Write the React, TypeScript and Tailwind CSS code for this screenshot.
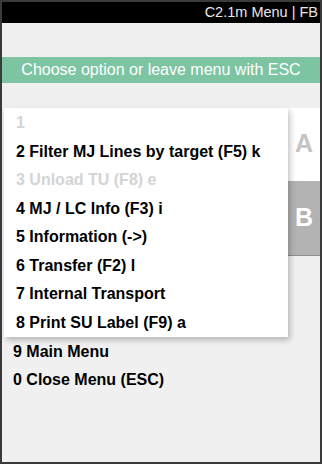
import React from "react";

const items = [
  { label: "1", disabled: true },
  { label: "2 Filter MJ Lines by target (F5) k" },
  { label: "3 Unload TU (F8) e", disabled: true },
  { label: "4 MJ / LC Info (F3) i" },
  { label: "5 Information (->)" },
  { label: "6 Transfer (F2) l" },
  { label: "7 Internal Transport" },
  { label: "8 Print SU Label (F9) a" },
];

export default function App() {
  return (
    <div className="w-[322px] h-[464px] border-2 border-[#3a3a3a] bg-[#f0f0f0] flex flex-col font-['Liberation_Sans',Arial,sans-serif]">
      <div className="h-[21px] bg-black flex items-center justify-end pr-[2px] text-[14.5px] text-[#e8e8e8] leading-none">
        C2.1m Menu | FB
      </div>
      <div className="mt-[34px] h-[26px] bg-[#7dc4a3] flex items-center justify-center text-white text-[16px] leading-none">
        Choose option or leave menu with ESC
      </div>
      <div className="mt-[25px] flex">
        <div className="ml-[2px] w-[284px] pt-[1px] bg-white shadow-[2px_3px_6px_rgba(0,0,0,0.25)] z-10">
          {items.map((it) => (
            <div
              key={it.label}
              className={`h-[28.5px] flex items-center pl-[12px] text-[16px] font-bold ${
                it.disabled ? "text-[#d4d4d4]" : "text-black"
              }`}
            >
              {it.label}
            </div>
          ))}
        </div>
        <div className="w-[32px] flex flex-col">
          <div className="h-[73px] pb-[2px] bg-white flex items-center justify-center text-[25px] font-bold text-[#c4c4c4]">
            A
          </div>
          <div className="h-[75px] bg-[#b3b3b3] border-b border-[#8f8f8f] flex items-center justify-center text-[25px] font-bold text-white">
            B
          </div>
        </div>
      </div>
      <div className="h-[28.5px] mt-[0.5px] flex items-center pl-[11px] text-[16px] font-bold text-black">
        9 Main Menu
      </div>
      <div className="h-[28.5px] flex items-center pl-[11px] text-[16px] font-bold text-black">
        0 Close Menu (ESC)
      </div>
    </div>
  );
}
